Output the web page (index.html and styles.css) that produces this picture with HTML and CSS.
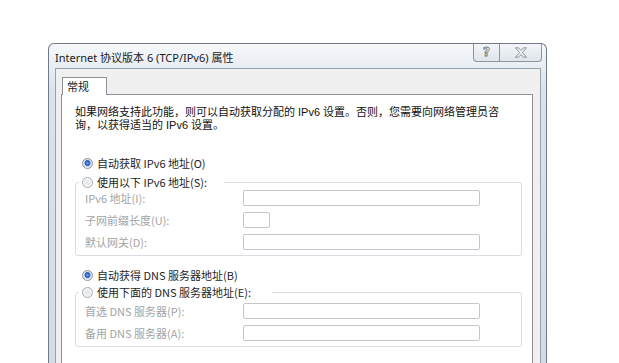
FILE: index.html
```html
<!DOCTYPE html>
<html lang="zh-CN">
<head>
<meta charset="utf-8">
<title>Internet 协议版本 6 (TCP/IPv6) 属性</title>
<link rel="stylesheet" href="styles.css">
</head>
<body>
<div class="window">
  <div class="titlebar">
    <span class="title">Internet 协议版本 6 (TCP/IPv6) 属性</span>
    <div class="caption-btns">
      <div class="cbtn help">?</div>
      <div class="cbtn close">
        <svg width="14" height="11" viewBox="0 0 14 11"><path d="M1.5 0.8h3l2.5 2.6 2.5-2.6h3l-4 4.7 4 4.7h-3L7 7.6 4.5 10.2h-3l4-4.7z" fill="#eef1f4" stroke="#7e868f" stroke-width="0.9" stroke-linejoin="round"/></svg>
      </div>
    </div>
  </div>
  <div class="client">
    <div class="tabs"><div class="tab">常规</div></div>
    <div class="panel">
      <div class="desc">
        <div class="line">如果网络支持此功能，则可以自动获取分配的 IPv6 设置。否则，您需要向网络管理员咨</div>
        <div class="line">询，以获得适当的 IPv6 设置。</div>
      </div>

      <div class="radio-row r1"><span class="radio on"></span><span>自动获取 IPv6 地址(O)</span></div>
      <fieldset class="group g1">
        <legend class="radio-row lg1"><span class="radio"></span><span>使用以下 IPv6 地址(S):</span></legend>
        <div class="fields">
          <div class="field"><span class="label">IPv6 地址(I):</span><span class="input wide"></span></div>
          <div class="field"><span class="label">子网前缀长度(U):</span><span class="input small"></span></div>
          <div class="field"><span class="label">默认网关(D):</span><span class="input wide"></span></div>
        </div>
      </fieldset>

      <div class="radio-row r3"><span class="radio on"></span><span>自动获得 DNS 服务器地址(B)</span></div>
      <fieldset class="group g2">
        <legend class="radio-row lg2"><span class="radio"></span><span>使用下面的 DNS 服务器地址(E):</span></legend>
        <div class="fields">
          <div class="field"><span class="label">首选 DNS 服务器(P):</span><span class="input wide"></span></div>
          <div class="field"><span class="label">备用 DNS 服务器(A):</span><span class="input wide"></span></div>
        </div>
      </fieldset>
    </div>
  </div>
</div>
</body>
</html>
```

FILE: styles.css
```css
html, body {
  margin: 0;
  padding: 0;
  background: #ffffff;
  overflow: hidden;
  height: 363px;
}

body {
  font-family: "Noto Sans", "Noto Sans CJK SC", sans-serif;
  font-size: 11px;
  color: #1e1e1e;
}

.window {
  box-sizing: border-box;
  margin: 43px 0 0 48px;
  width: 499px;
  height: 320px;
  border: 1px solid #6f7a86;
  border-bottom: none;
  border-radius: 6px 6px 0 0;
  padding: 0 5px 0 6px;
  background: linear-gradient(#f6f8fa 0, #e9eef4 22px, #d9e3ee 45px, #d2dce8 100%);
  display: flex;
  flex-direction: column;
}

.titlebar {
  height: 24px;
  display: flex;
  align-items: flex-start;
}

.title {
  margin-top: 6px;
  font-family: "Noto Sans", "Noto Sans CJK SC", sans-serif;
  font-size: 11px;
  line-height: 15px;
  color: #1a1a1a;
}

.caption-btns {
  margin-left: auto;
  margin-right: -1px;
  display: flex;
  height: 17px;
  border: 1px solid #8d949c;
  border-top: none;
  border-radius: 0 0 4px 4px;
  overflow: hidden;
  background: linear-gradient(#f3f5f8, #dfe5ec);
}

.cbtn {
  display: flex;
  align-items: center;
  justify-content: center;
}

.help {
  width: 25px;
  border-right: 1px solid #8d949c;
  font-family: "DejaVu Sans", sans-serif;
  font-weight: bold;
  font-size: 12px;
  line-height: 17px;
  color: #f4f6f8;
  -webkit-text-stroke: 0.8px #6f7782;
}

.close {
  width: 41px;
}

.client {
  flex: 1;
  border: 1px solid #99a3ae;
  border-bottom: none;
  background: #f0f0f0;
  padding: 8px 7px 0 5px;
  display: flex;
  flex-direction: column;
}

.tabs {
  display: flex;
  height: 17px;
}

.tab {
  box-sizing: border-box;
  margin-left: 1px;
  width: 45px;
  height: 18px;
  margin-bottom: -1px;
  border: 1px solid #8e9199;
  border-bottom: none;
  background: #ffffff;
  position: relative;
  z-index: 1;
  padding-left: 4px;
  font-family: "Noto Sans CJK SC", sans-serif;
  font-size: 11px;
  line-height: 17px;
  color: #1a1a1a;
}

.panel {
  flex: 1;
  border: 1px solid #8e9199;
  border-bottom: none;
  background: #ffffff;
  padding: 11px 10px 0 13px;
  font-family: "Noto Sans CJK SC", sans-serif;
}

.desc {
  font-family: "Liberation Sans", "Noto Sans CJK SC", sans-serif;
  font-size: 11px;
  line-height: 13px;
  color: #111111;
}

.line {
  white-space: nowrap;
}

.radio-row {
  display: flex;
  align-items: center;
  gap: 4px;
  height: 16px;
  line-height: 16px;
  font-size: 11px;
  color: #1e1e1e;
  white-space: nowrap;
}

.r1 {
  margin-top: 23px;
  padding-left: 7px;
}

.r3 {
  margin-top: 11px;
  padding-left: 7px;
}

.radio {
  box-sizing: border-box;
  width: 11px;
  height: 11px;
  border-radius: 50%;
  border: 1px solid #a6abb1;
  background: radial-gradient(circle at 50% 50%, #e2e4e7 0, #eceef0 2.5px, #f8f9fa 5px);
  flex: none;
}

.radio.on {
  border-color: #8c939b;
  background: radial-gradient(circle at 50% 45%, #6ea2ec 0, #2d62c8 2.2px, #2a5bbd 2.6px, #c9d6e6 3.2px, #eef2f6 5px);
}

.group {
  margin: 0;
  border: 1px solid #d6dde3;
  border-radius: 3px;
  padding: 0 9px 5px 9px;
  min-width: 0;
}

.g1 {
  margin-top: 3px;
}

.g2 {
  margin-top: 1px;
}

.group legend {
  padding: 0 17px 0 3px;
  margin-left: -6px;
}

.group legend.lg2 {
  padding-right: 21px;
}

.fields {
  display: flex;
  flex-direction: column;
  gap: 6px;
}

.g2 .fields {
  padding-top: 3px;
}

.field {
  display: flex;
  align-items: center;
  height: 16px;
}

.label {
  width: 158px;
  flex: none;
  color: #a3a3a3;
  font-size: 11px;
  white-space: nowrap;
}

.input {
  box-sizing: border-box;
  height: 16px;
  border: 1px solid #c4c6ca;
  border-radius: 2px;
  background: #ffffff;
}

.input.wide {
  width: 237px;
}

.input.small {
  width: 27px;
}
```
